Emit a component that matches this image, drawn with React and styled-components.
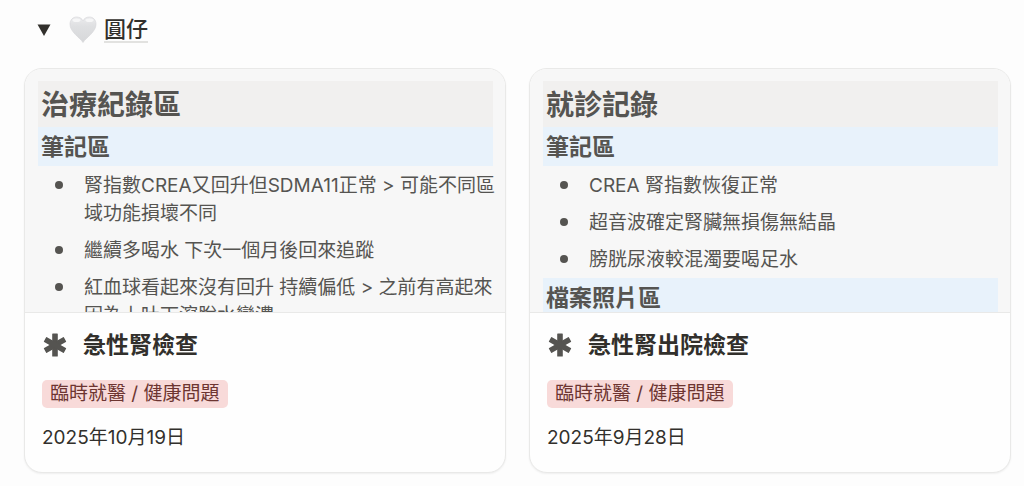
import { createGlobalStyle, styled } from 'styled-components';

const GlobalStyle = createGlobalStyle`
    * {
        box-sizing: border-box;
    }

    body {
        margin: 0;
        background-color: #fdfdfd;
        color: #32302c;
        font-family: Inter, "Noto Sans CJK TC", sans-serif;
        font-size: 19px;
        line-height: 28px;
    }

    h1, h2, h3, h4, p, ul {
        margin: 0;
        padding: 0;
    }
`

const Page = styled.main`
    padding: 12px 13px 13px 24px;
`

const GroupHeader = styled.header`
    display: flex;
    align-items: center;
    height: 36px;
    padding-left: 12px;
    margin-bottom: 20px;
`

const ToggleButton = styled.button`
    display: flex;
    padding: 0;
    margin-right: 17px;
    border: none;
    background: none;
    color: #32302c;
    cursor: pointer;
`

const GroupLink = styled.a`
    margin-left: 7px;
    border-bottom: 2px solid #e2e2e0;
    color: inherit;
    font-size: 22px;
    font-weight: 500;
    line-height: 24px;
    text-decoration: none;
`

const Gallery = styled.section`
    display: grid;
    grid-template-columns: 1fr 1fr;
    gap: 23px;
`

const Card = styled.article`
    overflow: hidden;
    border: 1px solid #e9e9e8;
    border-radius: 18px;
    background-color: #fefefe;
    box-shadow: 0 1px 2px rgb(0 0 0 / 6%);
`

const Preview = styled.div`
    height: 244px;
    padding: 12px 12px 0 13px;
    overflow: hidden;
    border-bottom: 1px solid #e9e9e8;
    background-color: #f7f7f7;
    color: #555451;
`

const PreviewTitle = styled.h3`
    padding: 2px 3px 0;
    background-color: #f1f0ef;
    font-size: 28px;
    font-weight: 600;
    line-height: 44px;
`

const PreviewHeading = styled.h4`
    padding: 2px 3px 0;
    background-color: #e8f2fb;
    font-size: 23px;
    font-weight: 600;
    line-height: 37px;
`

const NoteList = styled.ul`
    padding-top: 1px;
    margin-right: -8px;
    list-style: none;
`

const Note = styled.li`
    display: flex;
    padding: 5px 0 4px 17px;

    &::before {
        content: "";
        flex: none;
        width: 8px;
        height: 8px;
        margin: 9px 21px 0 0;
        border-radius: 50%;
        background-color: #555451;
    }
`

const Details = styled.div`
    padding: 16px 17px 20px;
`

const CardTitle = styled.h2`
    display: flex;
    align-items: center;
    gap: 15px;
    margin-bottom: 19px;
    font-size: 23px;
    font-weight: 600;
    line-height: 32px;
`

const Tag = styled.span`
    display: inline-block;
    padding: 0 8px;
    margin-bottom: 16px;
    border-radius: 5px;
    background-color: #f8dad9;
    color: #6d3531;
    vertical-align: top;
`

const cards = [
    {
        title: "急性腎檢查",
        tag: "臨時就醫 / 健康問題",
        date: "2025年10月19日",
        previewTitle: "治療紀錄區",
        sections: [
            {
                heading: "筆記區",
                notes: [
                    "腎指數CREA又回升但SDMA11正常 > 可能不同區域功能損壞不同",
                    "繼續多喝水 下次一個月後回來追蹤",
                    "紅血球看起來沒有回升 持續偏低 > 之前有高起來因為上吐下瀉脫水變濃"
                ]
            }
        ]
    },
    {
        title: "急性腎出院檢查",
        tag: "臨時就醫 / 健康問題",
        date: "2025年9月28日",
        previewTitle: "就診記錄",
        sections: [
            {
                heading: "筆記區",
                notes: [
                    "CREA 腎指數恢復正常",
                    "超音波確定腎臟無損傷無結晶",
                    "膀胱尿液較混濁要喝足水"
                ]
            },
            { heading: "檔案照片區", notes: [] }
        ]
    }
]

function HeartIcon() {
    return (
        <svg width="28" height="28" viewBox="0 0 28 28" aria-hidden="true">
            <defs>
                <linearGradient id="heartFill" x1="0" y1="0" x2="0" y2="1">
                    <stop offset="0" stopColor="#ececee" />
                    <stop offset="0.35" stopColor="#dfe0e2" />
                    <stop offset="1" stopColor="#d6d7d9" />
                </linearGradient>
            </defs>
            <path
                d="M14 26.500C12.500 24 9.500 21.800 6.200 18.300C3 14.900 1 12 1 8.100C1 3.800 4 1 7.600 1C10.700 1 13 2.600 14 4.800C15 2.600 17.300 1 20.400 1C24 1 27 3.800 27 8.100C27 12 25 14.900 21.800 18.300C18.500 21.800 15.500 24 14 26.500Z"
                fill="url(#heartFill)"
                stroke="#d3d4d6"
                strokeWidth="0.6"
            />
            <ellipse cx="7.500" cy="4.200" rx="4" ry="1.800" fill="#f6f6f7" />
            <ellipse cx="20.500" cy="4.200" rx="4" ry="1.800" fill="#f6f6f7" />
        </svg>
    )
}

function AsteriskIcon() {
    return (
        <svg width="26" height="26" viewBox="0 0 26 26" aria-hidden="true">
            <g fill="#555451">
                <rect x="10.200" y="1.500" width="5.600" height="23" rx="0.600" />
                <rect x="10.200" y="1.500" width="5.600" height="23" rx="0.600" transform="rotate(60 13 13)" />
                <rect x="10.200" y="1.500" width="5.600" height="23" rx="0.600" transform="rotate(120 13 13)" />
            </g>
        </svg>
    )
}

function GalleryCard({ card }) {
    return (
        <Card>
            <Preview>
                <PreviewTitle>{card.previewTitle}</PreviewTitle>
                {card.sections.map((section) => (
                    <div key={section.heading}>
                        <PreviewHeading>{section.heading}</PreviewHeading>
                        <NoteList>
                            {section.notes.map((note) => (
                                <Note key={note}>{note}</Note>
                            ))}
                        </NoteList>
                    </div>
                ))}
            </Preview>
            <Details>
                <CardTitle>
                    <AsteriskIcon />
                    {card.title}
                </CardTitle>
                <Tag>{card.tag}</Tag>
                <p>{card.date}</p>
            </Details>
        </Card>
    )
}

export default function App() {
    return (
        <>
            <GlobalStyle />
            <Page lang="zh-Hant">
                <GroupHeader>
                    <ToggleButton aria-label="圓仔" aria-expanded="true">
                        <svg width="16" height="14" viewBox="0 0 16 14" aria-hidden="true">
                            <path d="M1.500 1.500H14.500L8 13Z" fill="currentColor" />
                        </svg>
                    </ToggleButton>
                    <HeartIcon />
                    <GroupLink href="#">圓仔</GroupLink>
                </GroupHeader>
                <Gallery>
                    {cards.map((card) => (
                        <GalleryCard key={card.title} card={card} />
                    ))}
                </Gallery>
            </Page>
        </>
    )
}
